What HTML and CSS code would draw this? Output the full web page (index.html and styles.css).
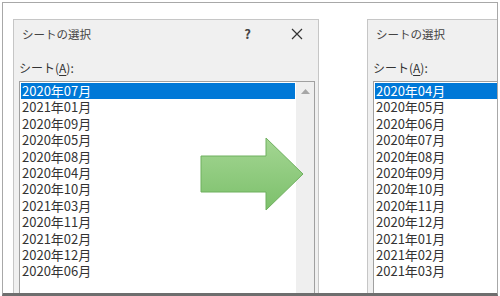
FILE: index.html
```html
<!DOCTYPE html>
<html lang="ja">
<head>
    <meta charset="UTF-8">
    <meta name="viewport" content="width=device-width, initial-scale=1.0">
    <title>シートの選択 - 並べ替え</title>
    <link rel="stylesheet" href="styles.css">
</head>
<body>
    <div class="frame">
        <!-- before -->
        <div class="dialog">
            <div class="titlebar">
                <span class="title">シートの選択</span>
                <span class="help">?</span>
                <svg class="close" width="12" height="12" viewBox="0 0 12 12">
                    <path d="M1 1 L11 11 M11 1 L1 11" stroke="#333" stroke-width="1.2" fill="none"/>
                </svg>
            </div>
            <div class="body">
                <div class="label">シート(<u>A</u>):</div>
                <div class="listbox">
                    <div class="items">
                        <div class="item selected">2020年07月</div>
                        <div class="item">2021年01月</div>
                        <div class="item">2020年09月</div>
                        <div class="item">2020年05月</div>
                        <div class="item">2020年08月</div>
                        <div class="item">2020年04月</div>
                        <div class="item">2020年10月</div>
                        <div class="item">2021年03月</div>
                        <div class="item">2020年11月</div>
                        <div class="item">2021年02月</div>
                        <div class="item">2020年12月</div>
                        <div class="item">2020年06月</div>
                    </div>
                    <div class="scrollbar">
                        <svg class="up" width="9" height="5" viewBox="0 0 9 5">
                            <path d="M0 5 L4.5 0 L9 5 Z" fill="#a6a6a6"/>
                        </svg>
                    </div>
                </div>
            </div>
        </div>

        <!-- after -->
        <div class="dialog">
            <div class="titlebar">
                <span class="title">シートの選択</span>
                <span class="help">?</span>
                <svg class="close" width="12" height="12" viewBox="0 0 12 12">
                    <path d="M1 1 L11 11 M11 1 L1 11" stroke="#333" stroke-width="1.2" fill="none"/>
                </svg>
            </div>
            <div class="body">
                <div class="label">シート(<u>A</u>):</div>
                <div class="listbox">
                    <div class="items">
                        <div class="item selected">2020年04月</div>
                        <div class="item">2020年05月</div>
                        <div class="item">2020年06月</div>
                        <div class="item">2020年07月</div>
                        <div class="item">2020年08月</div>
                        <div class="item">2020年09月</div>
                        <div class="item">2020年10月</div>
                        <div class="item">2020年11月</div>
                        <div class="item">2020年12月</div>
                        <div class="item">2021年01月</div>
                        <div class="item">2021年02月</div>
                        <div class="item">2021年03月</div>
                    </div>
                    <div class="scrollbar">
                        <svg class="up" width="9" height="5" viewBox="0 0 9 5">
                            <path d="M0 5 L4.5 0 L9 5 Z" fill="#a6a6a6"/>
                        </svg>
                    </div>
                </div>
            </div>
        </div>

        <svg class="arrow" width="104" height="74" viewBox="0 0 104 74">
            <defs>
                <linearGradient id="g" x1="0" y1="0" x2="0" y2="1">
                    <stop offset="0" stop-color="#a4d693"/>
                    <stop offset="1" stop-color="#7cc06b"/>
                </linearGradient>
            </defs>
            <polygon points="1,19 66,19 66,1 103,37 66,73 66,55 1,55" fill="url(#g)" stroke="#6fb05f" stroke-width="1"/>
        </svg>
    </div>
</body>
</html>
```

FILE: styles.css
```css
body {
    margin: 0;
    background: #fff;
    font-family: "Noto Sans CJK JP", sans-serif;
    color: #333;
}
.frame {
    position: relative;
    margin: 2px 2px 0;
    height: 294px;
    box-sizing: border-box;
    border: 1px solid #a8a8a8;
    border-bottom: 3px solid #6e6e6e;
    padding: 16px 0 0 10px;
    display: flex;
    gap: 48px;
    overflow: hidden;
}
.dialog {
    flex-shrink: 0;
    width: 306px;
    box-sizing: border-box;
    background: #f0f0f0;
    border: 1px solid #c6c6c6;
    border-bottom: 0;
}
.titlebar {
    height: 27px;
    display: flex;
    align-items: center;
    padding-left: 8px;
}
.title {
    font-size: 11.5px;
    color: #444;
    flex: 1;
}
.help {
    font-size: 13px;
    font-weight: bold;
    color: #444;
    margin-right: 40px;
}
.close {
    margin-right: 15px;
}
.body {
    padding: 0 3px 0 5px;
}
.label {
    font-size: 12px;
    line-height: 16px;
    margin: 13px 0 5px;
}
.label u {
    text-underline-offset: 2px;
}
.listbox {
    display: flex;
    height: 240px;
    background: #fff;
    border: 1px solid #a0a0a0;
    border-bottom: 0;
}
.items {
    flex: 1;
    padding: 1px;
}
.item {
    font-size: 13px;
    line-height: 16.4px;
    padding-left: 1px;
    color: #333;
}
.item.selected {
    background: #0078d7;
    color: #fff;
}
.scrollbar {
    width: 18px;
    background: #efefef;
    display: flex;
    justify-content: center;
    padding-top: 7px;
    box-sizing: border-box;
}
.up {
    display: block;
}
.arrow {
    position: absolute;
    left: 197px;
    top: 134px;
}
```
